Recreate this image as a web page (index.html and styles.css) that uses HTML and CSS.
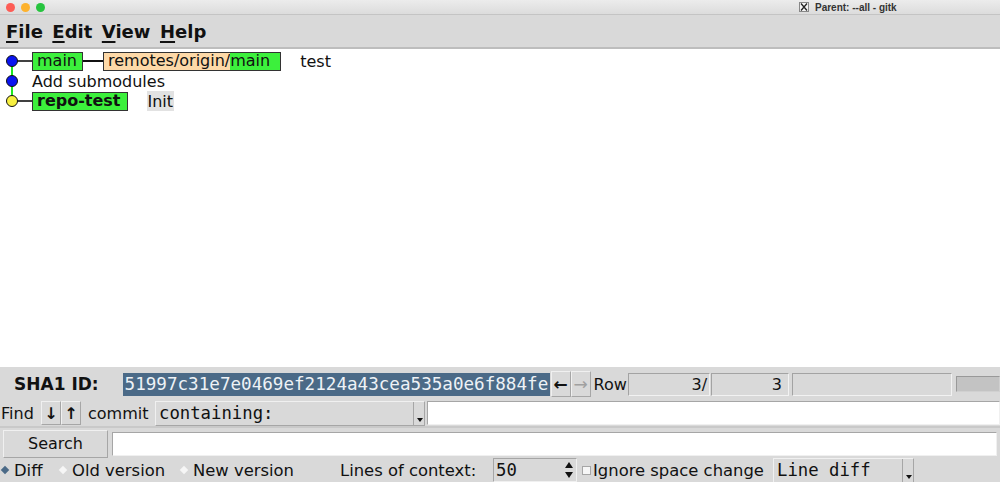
FILE: index.html
```html
<!DOCTYPE html>
<html lang="en">
<head>
    <meta charset="UTF-8">
    <title>Parent: --all - gitk</title>
    <link rel="stylesheet" href="styles.css">
</head>
<body>
    <div class="window">
        <header class="titlebar">
            <div class="lights">
                <span class="light red"></span>
                <span class="light yellow"></span>
                <span class="light green"></span>
            </div>
            <div class="title">
                <svg class="x-icon" width="10" height="10" viewBox="0 0 10 10">
                    <rect x="0.5" y="0.5" width="9" height="9" fill="#f4f4f4" stroke="#888"/>
                    <path d="M2 1.5 L8 8.5 M8 1.5 L2 8.5" stroke="#222" stroke-width="1.3"/>
                </svg>
                Parent: --all - gitk
            </div>
        </header>

        <nav class="menubar">
            <span class="menu"><u>F</u>ile</span>
            <span class="menu"><u>E</u>dit</span>
            <span class="menu"><u>V</u>iew</span>
            <span class="menu"><u>H</u>elp</span>
        </nav>

        <main class="history">
            <div class="graph">
                <svg class="lanes" width="32" height="60" viewBox="0 0 32 60">
                    <line x1="12" y1="10" x2="12" y2="50" stroke="#1ee81e" stroke-width="2"/>
                    <line x1="16" y1="10" x2="32" y2="10" stroke="#111" stroke-width="1.6"/>
                    <line x1="16" y1="50" x2="32" y2="50" stroke="#111" stroke-width="1.6"/>
                    <circle cx="12" cy="10" r="5.5" fill="#0a14f0" stroke="#111" stroke-width="1"/>
                    <circle cx="12" cy="30" r="5.5" fill="#0a14f0" stroke="#111" stroke-width="1"/>
                    <circle cx="12" cy="50" r="5.5" fill="#f8f040" stroke="#111" stroke-width="1"/>
                </svg>
                <div class="commits">
                    <div class="commit">
                        <span class="ref head">main</span>
                        <span class="ref-link"></span>
                        <span class="ref remote"><span class="remote-part">remotes/origin/</span><span class="head-part">main</span></span>
                        <span class="message">test</span>
                    </div>
                    <div class="commit">
                        <span class="message first">Add submodules</span>
                    </div>
                    <div class="commit">
                        <span class="ref head current">repo-test</span>
                        <span class="message marked">Init</span>
                    </div>
                </div>
            </div>
        </main>

        <section class="details">
            <div class="row sha-row">
                <span class="sha-label">SHA1 ID:</span>
                <span class="sha-entry">51997c31e7e0469ef2124a43cea535a0e6f884fe</span>
                <span class="btn arrow">&#8592;</span>
                <span class="btn arrow disabled">&#8594;</span>
                <span class="row-label">Row</span>
                <span class="sunken num num-a">3/</span>
                <span class="sunken num num-b">3</span>
                <span class="sunken status"></span>
                <span class="progress"></span>
            </div>

            <div class="row find-row">
                <span class="find-label">Find</span>
                <span class="btn small">&#8595;</span>
                <span class="btn small">&#8593;</span>
                <span class="commit-label">commit</span>
                <span class="combo find-combo">containing:<span class="drop"></span></span>
                <span class="entry find-entry"></span>
            </div>

            <div class="row search-row">
                <span class="btn search-btn">Search</span>
                <span class="entry search-entry"></span>
            </div>

            <div class="row diff-row">
                <span class="radio radio-diff"><span class="diamond on"></span>Diff</span>
                <span class="radio radio-old"><span class="diamond"></span>Old version</span>
                <span class="radio radio-new"><span class="diamond"></span>New version</span>
                <span class="context-label">Lines of context:</span>
                <span class="spin">50<span class="spin-arrows"></span></span>
                <span class="check"><span class="box"></span>Ignore space change</span>
                <span class="combo diff-combo">Line diff<span class="drop"></span></span>
            </div>
        </section>
    </div>
</body>
</html>
```

FILE: styles.css
```css
* {
    margin: 0;
    padding: 0;
    box-sizing: border-box;
}

body {
    font-family: 'DejaVu Sans', 'Liberation Sans', sans-serif;
    background: #d9d9d9;
    color: #111;
    width: 1000px;
    height: 482px;
    overflow: hidden;
}

.window {
    width: 1000px;
    height: 482px;
    display: flex;
    flex-direction: column;
}

/* title bar */

.titlebar {
    height: 15px;
    display: flex;
    align-items: center;
    background: linear-gradient(#ececec, #dcdcdc);
    border-bottom: 1px solid #c4c4c4;
}

.lights {
    display: flex;
    gap: 6px;
    padding-left: 6px;
}

.light {
    width: 9px;
    height: 9px;
    border-radius: 50%;
}

.light.red { background: #fd5d56; }
.light.yellow { background: #fdb22e; }
.light.green { background: #27c43f; }

.title {
    margin-left: 754px;
    display: flex;
    align-items: center;
    gap: 6px;
    font-family: 'Liberation Sans', sans-serif;
    font-weight: 700;
    font-size: 10px;
    color: #333;
}

/* menu */

.menubar {
    height: 34px;
    display: flex;
    align-items: center;
    gap: 9.5px;
    padding: 1px 0 0 6px;
    background: #d9d9d9;
    border-bottom: 2px solid #bdbdbd;
}

.menu {
    font-weight: 700;
    font-size: 18px;
    color: #111;
}

.menu u {
    text-decoration-thickness: 2px;
    text-underline-offset: 3px;
}

/* commit graph */

.history {
    height: 318px;
    background: #fff;
    padding-top: 2px;
}

.graph {
    display: flex;
}

.lanes {
    flex: none;
}

.commits {
    display: flex;
    flex-direction: column;
}

.commit {
    height: 20px;
    display: flex;
    align-items: center;
    font-size: 16px;
}

.ref {
    height: 19px;
    display: flex;
    align-items: center;
    border: 1px solid #333;
    padding: 0 5px 0 4px;
    line-height: 1;
}

.head {
    background: #3cf03c;
}

.head.current {
    font-weight: 700;
    padding-right: 6px;
}

.ref.remote {
    padding: 0;
}

.remote-part {
    background: #fdd9a8;
    padding-left: 4px;
    height: 100%;
    display: flex;
    align-items: center;
}

.head-part {
    background: #3cf03c;
    padding-right: 10px;
    height: 100%;
    display: flex;
    align-items: center;
}

.ref-link {
    width: 20px;
    height: 2px;
    background: #111;
}

.message {
    margin-left: 19px;
}

.message.first {
    margin-left: 0;
}

.message.marked {
    background: #e2e2e2;
    padding: 1px 1px 0 1px;
}

/* details panel */

.details {
    flex: 1;
    background: #d9d9d9;
    font-size: 16px;
}

.row {
    display: flex;
    align-items: center;
}

.sunken {
    border: 1px solid;
    border-color: #a3a3a3 #f2f2f2 #f2f2f2 #a3a3a3;
}

.btn {
    display: flex;
    align-items: center;
    justify-content: center;
    border: 1px solid;
    border-color: #f0f0f0 #a6a6a6 #a6a6a6 #f0f0f0;
    background: #d9d9d9;
}

.sha-row {
    height: 33px;
    padding-top: 1px;
}

.sha-label {
    font-weight: 700;
    font-size: 17px;
    margin-left: 14px;
    width: 109px;
}

.sha-entry {
    height: 23px;
    display: flex;
    align-items: center;
    background: #4b6a87;
    color: #eef2f6;
    font-family: 'DejaVu Sans Mono', monospace;
    font-size: 17.6px;
    padding-left: 2px;
    width: 429px;
    overflow: hidden;
    white-space: nowrap;
}

.arrow {
    width: 20px;
    height: 26px;
    font-size: 17px;
    font-weight: 700;
}

.sha-entry + .arrow {
    margin-left: 1px;
}

.arrow.disabled {
    color: #a0a0a0;
    font-weight: 400;
}

.row-label {
    margin-left: 3px;
    width: 35px;
}

.num {
    height: 23px;
    text-align: right;
    padding-right: 2px;
    line-height: 21px;
}

.num-a {
    width: 82px;
}

.num-b {
    width: 78px;
    margin-left: 1px;
    padding-right: 6px;
}

.status {
    width: 161px;
    height: 23px;
    margin-left: 3px;
}

.progress {
    width: 44px;
    height: 16px;
    margin-left: 4px;
    background: #c3c3c3;
    border: 1px solid;
    border-color: #999 #d0d0d0 #d0d0d0 #999;
}

.find-row {
    height: 28px;
    border-bottom: 2px solid #c9c9c9;
}

.find-label {
    margin-left: 1px;
    width: 40px;
}

.btn.small {
    width: 20px;
    height: 24px;
    font-size: 16px;
    font-weight: 700;
}

.commit-label {
    margin-left: 7px;
    width: 67px;
}

.combo {
    position: relative;
    display: flex;
    align-items: center;
    height: 25px;
    font-family: 'DejaVu Sans Mono', monospace;
    font-size: 17.3px;
    padding-left: 3px;
    border: 1px solid;
    border-color: #f0f0f0 #a6a6a6 #a6a6a6 #f0f0f0;
}

.find-combo {
    width: 270px;
}

.drop {
    position: absolute;
    right: 0;
    top: 0;
    bottom: 0;
    width: 11px;
    border-left: 1px solid #a6a6a6;
}

.drop::after {
    content: "";
    position: absolute;
    left: 3px;
    bottom: 3px;
    border-left: 3px solid transparent;
    border-right: 3px solid transparent;
    border-top: 4px solid #111;
}

.entry {
    background: #fff;
    border: 1px solid;
    border-color: #a6a6a6 #f0f0f0 #f0f0f0 #a6a6a6;
}

.find-entry {
    flex: 1;
    height: 24px;
    margin-left: 2px;
}

.search-row {
    height: 30px;
    padding-top: 1px;
}

.search-btn {
    width: 105px;
    height: 28px;
    margin-left: 3px;
}

.search-entry {
    width: 885px;
    height: 24px;
    margin-left: 4px;
}

.diff-row {
    height: 24px;
    font-size: 16.4px;
}

.radio {
    display: flex;
    align-items: center;
    flex: none;
}

.radio-diff { width: 58px; }
.radio-old { width: 121px; }
.radio-new { width: 161px; }

.diamond {
    width: 6px;
    height: 6px;
    transform: rotate(45deg);
    background: #f6f6f6;
    margin: 0 6px 0 2px;
}

.diamond.on {
    background: #4b6a87;
}

.context-label {
    width: 153px;
    flex: none;
}

.spin {
    position: relative;
    width: 84px;
    height: 24px;
    display: flex;
    align-items: center;
    font-family: 'DejaVu Sans Mono', monospace;
    font-size: 17.3px;
    padding-left: 2px;
    border: 1px solid;
    border-color: #a6a6a6 #f0f0f0 #f0f0f0 #a6a6a6;
}

.spin-arrows {
    position: absolute;
    right: 0;
    top: 0;
    bottom: 0;
    width: 13px;
}

.spin-arrows::before,
.spin-arrows::after {
    content: "";
    position: absolute;
    left: 2px;
    border-left: 4px solid transparent;
    border-right: 4px solid transparent;
}

.spin-arrows::before {
    top: 3px;
    border-bottom: 6px solid #111;
}

.spin-arrows::after {
    bottom: 3px;
    border-top: 6px solid #111;
}

.check {
    display: flex;
    align-items: center;
    margin-left: 5px;
    width: 191px;
    flex: none;
}

.check .box {
    width: 9px;
    height: 9px;
    background: #f6f6f6;
    border: 1px solid #a6a6a6;
    margin-right: 2px;
}

.diff-combo {
    width: 141px;
}
```
